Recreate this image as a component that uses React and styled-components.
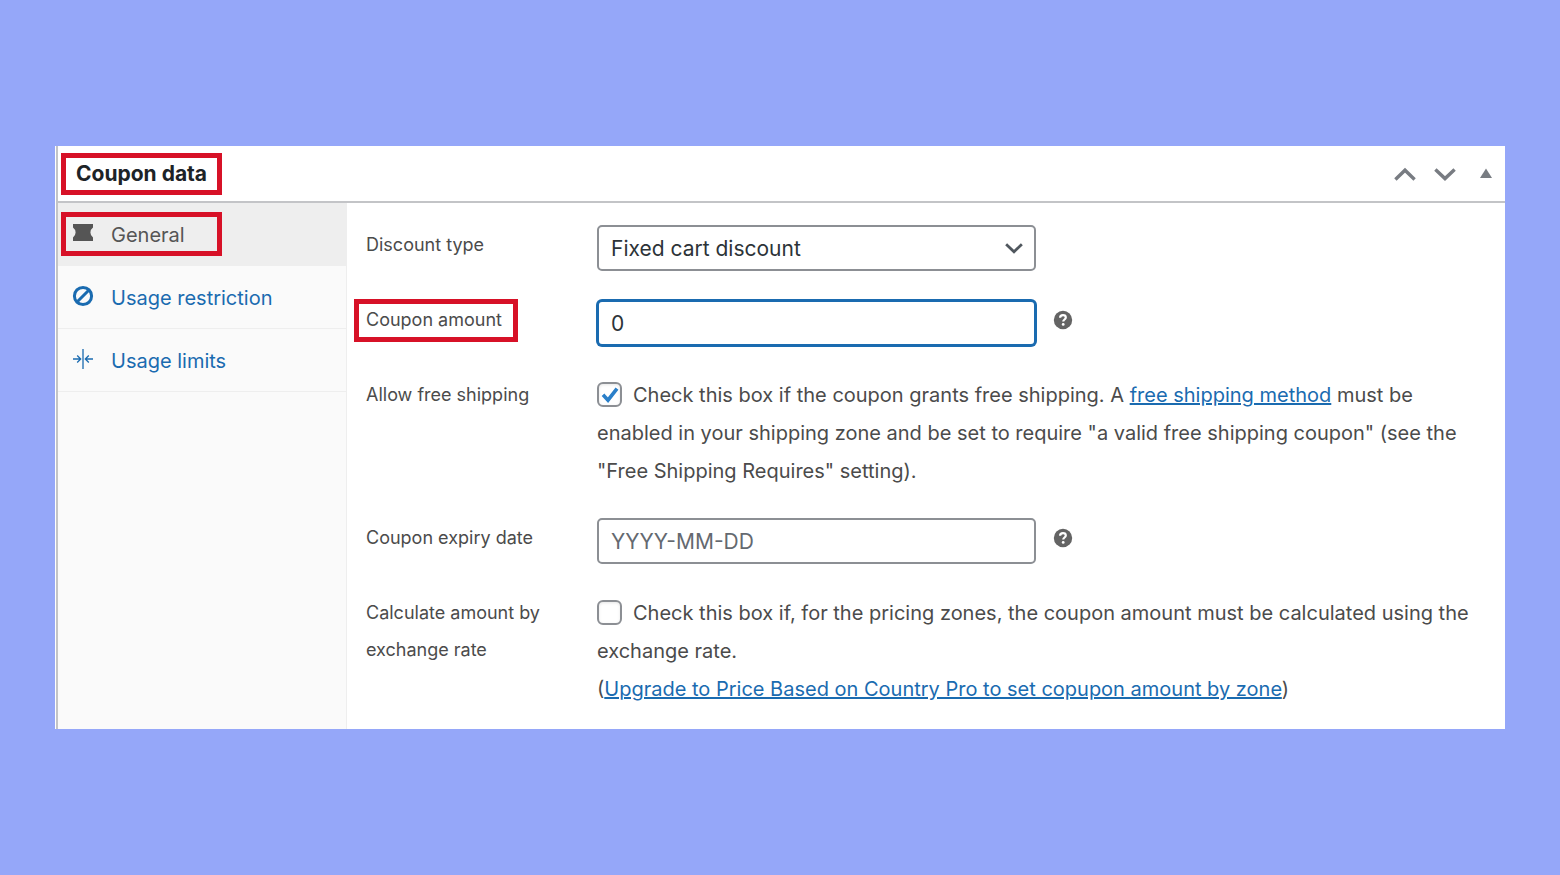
import React, { useState } from "react";
import styled, { createGlobalStyle, css } from "styled-components";


const COLORS = {
  page: "#95a7f9",
  label: "#4b4b4b",
  heading: "#1d2327",
  link: "#1a6bb0",
  border: "#c3c4c7",
  field: "#8c8f94",
  icon: "#787c82",
  mark: "#d71127",
};


const TicketIcon = () => (
  <svg width="22" height="20" viewBox="0 0 22 20" aria-hidden="true">
    <path d="M1 1h20v3.6q-2.6 2-2.6 4.9t2.6 4.9V18H1v-3.6q2.6-2 2.6-4.9T1 4.6z" fill="#555" />
  </svg>
);

const BanIcon = () => (
  <svg width="22" height="22" viewBox="0 0 22 22" fill="none" stroke="currentColor" strokeWidth="3" aria-hidden="true">
    <circle cx="11" cy="11" r="8.6" />
    <path d="M5 17L17 5" />
  </svg>
);

const LimitsIcon = () => (
  <svg width="22" height="22" viewBox="0 0 22 22" fill="none" stroke="currentColor" strokeWidth="1.3" aria-hidden="true">
    <path d="M11 1v20M1 11h7.5M5.2 7.5L8.7 11l-3.5 3.5M21 11h-7.5M16.8 7.5L13.3 11l3.5 3.5" />
  </svg>
);

const Chevron = ({ up, size = 22, color = COLORS.icon, stroke = 3.4 }) => (
  <svg width={size} height={size} viewBox="0 0 22 22" fill="none" stroke={color} strokeWidth={stroke} aria-hidden="true">
    <path d={up ? "M1.4 16.4L11 7.2l9.6 9.2" : "M1.4 6.4L11 15.6l9.6-9.2"} />
  </svg>
);

const Help = ({ text }) => (
  <HelpTip type="button" aria-label={text}>
    <svg width="20" height="20" viewBox="0 0 20 20" aria-hidden="true">
      <circle cx="10" cy="10" r="9.2" fill="#646464" />
      <path d="M7.1 7.8c0-1.7 1.3-2.6 2.9-2.6s2.8.9 2.8 2.3c0 2-2.6 2-2.6 4.1" fill="none" stroke="#fff" strokeWidth="2.2" />
      <circle cx="10.2" cy="14.4" r="1.4" fill="#fff" />
    </svg>
  </HelpTip>
);


const TABS = [
  { id: "general", title: "General", Icon: TicketIcon, marked: true },
  { id: "restriction", title: "Usage restriction", Icon: BanIcon },
  { id: "limits", title: "Usage limits", Icon: LimitsIcon },
];


const App = () => {
  const [ type, setType ] = useState("fixed_cart");
  const [ amount, setAmount ] = useState("0");
  const [ expiry, setExpiry ] = useState("");
  const [ freeShipping, setFreeShipping ] = useState(true);
  const [ byRate, setByRate ] = useState(false);

  return (
    <Page>
      <GlobalStyle />
      <Panel>
        <Header>
          <Title>Coupon data</Title>
          <Actions>
            <IconButton type="button" aria-label="Move up"><Chevron up /></IconButton>
            <IconButton type="button" aria-label="Move down"><Chevron /></IconButton>
            <IconButton type="button" aria-label="Toggle panel">
              <svg width="12" height="22" viewBox="0 0 12 22" aria-hidden="true">
                <path d="M6 5.5L12 15H0z" fill={COLORS.icon} />
              </svg>
            </IconButton>
          </Actions>
        </Header>

        <Body>
          <Tabs aria-label="Coupon data sections">
            {TABS.map(({ id, title, Icon, marked }) => (
              <Tab key={id} href={"#" + id} $active={id === "general"}>
                <TabInner $marked={marked}><Icon />{title}</TabInner>
              </Tab>
            ))}
          </Tabs>

          <Fields>
            <Label htmlFor="type">Discount type</Label>
            <Control>
              <SelectWrap>
                <Select id="type" value={type} onChange={(event) => setType(event.target.value)}>
                  <option value="percent">Percentage discount</option>
                  <option value="fixed_cart">Fixed cart discount</option>
                  <option value="fixed_product">Fixed product discount</option>
                </Select>
                <Chevron size={18} color="#50575e" />
              </SelectWrap>
            </Control>

            <Label htmlFor="amount" $marked>Coupon amount</Label>
            <Control>
              <Input id="amount" $active value={amount} onChange={(event) => setAmount(event.target.value)} />
              <Help text="Value of the coupon" />
            </Control>

            <Label htmlFor="shipping">Allow free shipping</Label>
            <Description>
              <Checkbox id="shipping" type="checkbox" checked={freeShipping}
                onChange={() => setFreeShipping(!freeShipping)} />
              Check this box if the coupon grants free shipping. A <Link href="#method">free shipping method</Link> must
              be enabled in your shipping zone and be set to require "a valid free shipping coupon" (see the "Free
              Shipping Requires" setting).
            </Description>

            <Label htmlFor="expiry">Coupon expiry date</Label>
            <Control>
              <Input id="expiry" placeholder="YYYY-MM-DD" value={expiry}
                onChange={(event) => setExpiry(event.target.value)} />
              <Help text="The coupon expires at 00:00:00 of this date" />
            </Control>

            <Label htmlFor="rate">Calculate amount by exchange rate</Label>
            <Description>
              <Checkbox id="rate" type="checkbox" checked={byRate} onChange={() => setByRate(!byRate)} />
              Check this box if, for the pricing zones, the coupon amount must be calculated using the exchange rate.
              <br />
              (<Link href="#upgrade">Upgrade to Price Based on Country Pro to set copupon amount by zone</Link>)
            </Description>
          </Fields>
        </Body>
      </Panel>
    </Page>
  );
};


const GlobalStyle = createGlobalStyle`
  * { box-sizing: border-box; }

  body {
    margin: 0;
    background-color: ${COLORS.page};
    color: ${COLORS.label};
    font-family: Inter, "Liberation Sans", sans-serif;
    font-size: 20px;
  }
`;

const Page = styled.main`
  display: flex;
  align-items: center;
  min-height: 100vh;
  padding: 55px;
`;

const Panel = styled.section`
  flex: 1;
  padding-left: 1px;
  background-color: #fff;
`;

const Header = styled.header`
  display: flex;
  align-items: center;
  justify-content: space-between;
  height: 57px;
  padding: 0 13px 0 3px;
  border-left: 2px solid ${COLORS.border};
  border-bottom: 2px solid ${COLORS.border};
`;

const Title = styled.h2`
  margin: 0;
  padding: 0 10px;
  border: 5px solid ${COLORS.mark};
  color: ${COLORS.heading};
  font-size: 21px;
  font-weight: 700;
  line-height: 32px;
`;

const Actions = styled.div`
  display: flex;
  align-items: center;
  gap: 18px;
`;

const IconButton = styled.button`
  display: flex;
  padding: 0;
  border: none;
  background: none;
  cursor: pointer;

  &:last-child { margin-left: 6px; }
`;

const Body = styled.div`
  display: flex;
  border-left: 2px solid ${COLORS.border};
`;

const Tabs = styled.nav`
  flex: 0 0 289px;
  border-right: 1px solid #eee;
  background-color: #fafafa;
`;

const Tab = styled.a`
  display: flex;
  align-items: center;
  height: 63px;
  padding: 0 3px;
  border-bottom: 1px solid #eee;
  background-color: ${(props) => props.$active ? "#eee" : "transparent"};
  color: ${(props) => props.$active ? "#555" : COLORS.link};
  text-decoration: none;
`;

const TabInner = styled.span`
  display: flex;
  align-items: center;
  gap: 17px;
  height: 44px;
  padding: 2px 32px 0 6px;
  border: 5px solid ${(props) => props.$marked ? COLORS.mark : "transparent"};

  svg { margin-bottom: 4px; }
`;

const Fields = styled.form`
  flex: 1;
  display: grid;
  grid-template-columns: 200px 1fr;
  gap: 29px 31px;
  align-items: start;
  padding: 23px 30px 21px 19px;
`;

const Label = styled.label`
  position: relative;
  font-size: 18px;
  line-height: 37px;

  ${(props) => props.$marked && css`
    justify-self: start;

    &::after {
      content: "";
      position: absolute;
      inset: -2px -16px -4px -12px;
      border: 5px solid ${COLORS.mark};
    }
  `}
`;

const Control = styled.div`
  display: flex;
  align-items: center;
  gap: 17px;
  height: 46px;
  margin: -1px 0 1px;
`;

const fieldStyle = css`
  width: 439px;
  height: 46px;
  padding: 0 12px;
  border: 2px solid ${COLORS.field};
  border-radius: 5px;
  background-color: #fff;
  color: #2c3338;
  font: inherit;
  font-size: 21px;
`;

const Input = styled.input`
  ${fieldStyle}

  &::placeholder { color: #646970; }

  ${(props) => props.$active && css`
    border-color: ${COLORS.link};
    box-shadow: 0 0 0 1px ${COLORS.link};
    outline: none;
  `}
`;

const SelectWrap = styled.div`
  position: relative;

  svg {
    position: absolute;
    top: 14px;
    right: 13px;
    pointer-events: none;
  }
`;

const Select = styled.select`
  ${fieldStyle}
  appearance: none;
`;

const HelpTip = styled.button`
  display: flex;
  margin-bottom: 6px;
  padding: 0;
  border: none;
  background: none;
  cursor: help;
`;

const Description = styled.div`
  line-height: 38px;
`;

const Checkbox = styled.input`
  appearance: none;
  width: 25px;
  height: 25px;
  margin: 0 11px 0 0;
  border: 2px solid ${COLORS.field};
  border-radius: 6px;
  background-color: #fff;
  box-shadow: inset 0 1px 3px rgba(0, 0, 0, 0.1);
  vertical-align: -5px;

  &:checked {
    background-image: url("data:image/svg+xml,%3Csvg xmlns='http://www.w3.org/2000/svg' viewBox='0 0 21 21'%3E%3Cpath d='M4 10.8l5 5.4L18 4.6' fill='none' stroke='%232a7fc9' stroke-width='3.6'/%3E%3C/svg%3E");
  }
`;

const Link = styled.a`
  color: ${COLORS.link};
  text-decoration: underline;
`;

export default App;
